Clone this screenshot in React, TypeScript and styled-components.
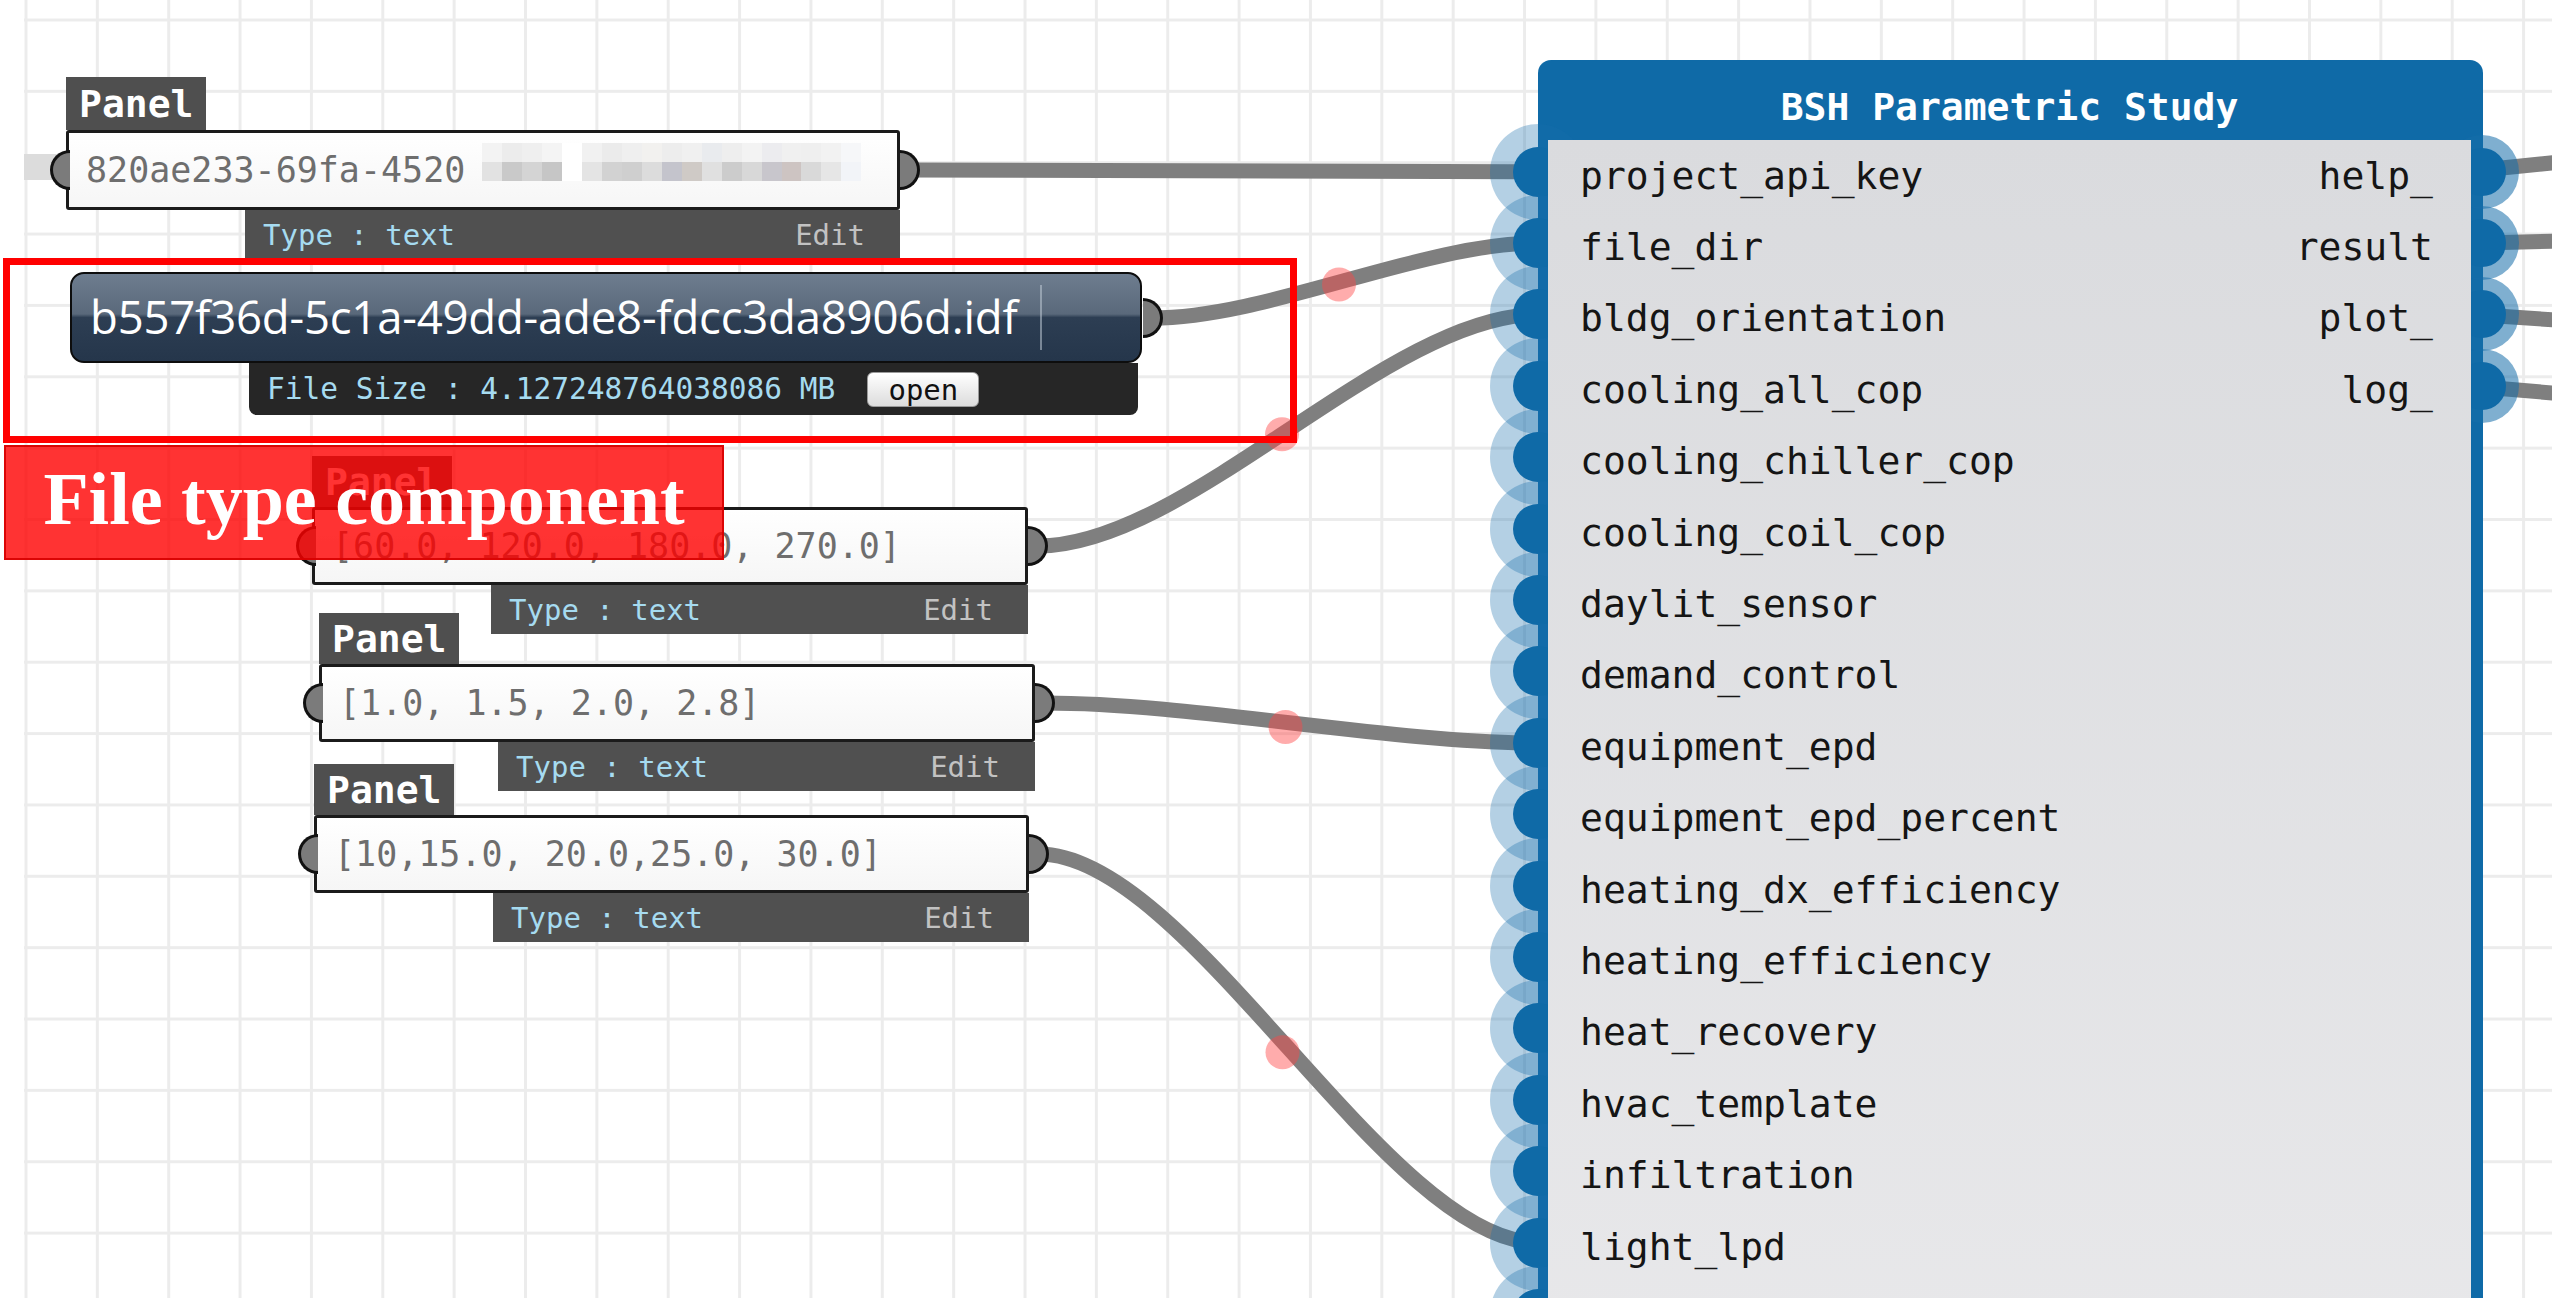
import React from "react";
import styled, { createGlobalStyle } from "styled-components";

const MONO = `"DejaVu Sans Mono", "Liberation Mono", monospace`;
const BLUE = "#0f6aa7";

const GlobalStyle = createGlobalStyle`
  html, body { margin: 0; padding: 0; background: #fff; }
  body { overflow: hidden; }
  * { box-sizing: border-box; }
`;

const Canvas = styled.div`
  position: relative;
  width: 2552px;
  height: 1298px;
  overflow: hidden;
  background: #fff;
  font-family: ${MONO};
`;

const Grid = styled.div`
  position: absolute;
  left: 24px;
  top: 0;
  right: 0;
  bottom: 0;
  background-image:
    linear-gradient(to right, #ececec 0, #ececec 3px, transparent 3px),
    linear-gradient(to bottom, #ececec 0, #ececec 3px, transparent 3px);
  background-size: 71.37px 71.37px;
  background-position: 0.5px 18.5px;
`;

const WireLayer = styled.svg`
  position: absolute;
  left: 0;
  top: 0;
  z-index: 1;
  overflow: visible;
`;

/* ---------- panels ---------- */

const PanelNode = styled.div<{ $x: number; $y: number; $w: number }>`
  position: absolute;
  left: ${p => p.$x}px;
  top: ${p => p.$y}px;
  width: ${p => p.$w}px;
  z-index: 2;
  display: flex;
  flex-direction: column;
`;

const PanelTag = styled.div<{ $h: number }>`
  align-self: flex-start;
  height: ${p => p.$h}px;
  padding: 0 13px;
  display: flex;
  align-items: center;
  background: #4f4f4f;
  color: #fff;
  font: bold 38px ${MONO};
`;

const PanelBox = styled.div<{ $h: number }>`
  position: relative;
  height: ${p => p.$h}px;
  display: flex;
  align-items: center;
  padding-left: 17px;
  background: linear-gradient(#ffffff, #f6f6f6);
  border: 3px solid #1b1b1b;
  border-radius: 3px;
  color: #6e6e6e;
  font-size: 35px;
  white-space: pre;
`;

const Port = styled.span<{ $side: "left" | "right" }>`
  position: absolute;
  top: 50%;
  width: 20px;
  height: 40px;
  margin-top: -20px;
  background: #7b7b7b;
  border: 3px solid #111;
  ${p =>
    p.$side === "left"
      ? `left: -19px; border-right: none; border-radius: 20px 0 0 20px / 20px 0 0 20px;`
      : `right: -23px; border-left: none; border-radius: 0 20px 20px 0 / 0 20px 20px 0;`}
`;

const BlurStrip = styled.div`
  display: grid;
  grid-template-columns: repeat(19, 1fr);
  grid-template-rows: 1fr 1fr;
  width: 379px;
  height: 38px;
  margin-left: 17px;
  margin-bottom: 16px;
`;

const BlurCell = styled.span<{ $c: string }>`
  background: ${p => p.$c};
`;

const InfoBar = styled.div<{ $dark?: boolean }>`
  margin-left: 179px;
  margin-right: ${p => (p.$dark ? 4 : 0)}px;
  height: ${p => (p.$dark ? 52 : 49)}px;
  display: flex;
  align-items: center;
  justify-content: ${p => (p.$dark ? "flex-start" : "space-between")};
  gap: 32px;
  padding: 0 35px 0 18px;
  background: ${p => (p.$dark ? "#262626" : "#505050")};
  border-radius: ${p => (p.$dark ? "0 0 8px 8px" : "0")};
  font-size: ${p => (p.$dark ? 29.5 : 29)}px;
  white-space: pre;
`;

const InfoText = styled.span`
  color: #a6dbf0;
`;

const EditText = styled.span`
  color: #c2c2c2;
`;

/* ---------- file component ---------- */

const FileBox = styled.div`
  position: relative;
  height: 91px;
  display: flex;
  align-items: center;
  padding-left: 18px;
  border: 2px solid #0d0d0d;
  border-radius: 14px;
  background: linear-gradient(
    #6e7d8f 0%,
    #5a697b 46%,
    #2d3e53 50%,
    #25364b 100%
  );
  color: #fff;
  font: 45.5px "Open Sans", "Noto Sans", sans-serif;
`;

const FileName = styled.span`
  flex: 1;
  padding-bottom: 4px;
  letter-spacing: -0.2px;
`;

const Caret = styled.span`
  width: 2px;
  height: 65px;
  margin-right: 98px;
  background: rgba(190, 200, 212, 0.55);
`;

const OpenButton = styled.button`
  width: 112px;
  height: 35px;
  padding: 0 0 4px;
  border: 1px solid #9a9a9a;
  border-radius: 6px;
  background: linear-gradient(#ffffff, #dcdcdc);
  color: #111;
  font: 29px ${MONO};
`;

/* ---------- main node ---------- */

const Node = styled.div<{ $x: number; $y: number; $w: number }>`
  position: absolute;
  left: ${p => p.$x}px;
  top: ${p => p.$y}px;
  width: ${p => p.$w}px;
  height: 1400px;
  z-index: 2;
  display: flex;
  flex-direction: column;
  padding: 0 12px 0 10px;
  background: ${BLUE};
  border-radius: 13px 13px 0 0;
`;

const NodeTitle = styled.div`
  height: 80px;
  flex-shrink: 0;
  display: flex;
  align-items: center;
  justify-content: center;
  padding-top: 14px;
  color: #fff;
  font: bold 38px ${MONO};
`;

const NodeBody = styled.div`
  flex: 1;
  display: flex;
  flex-direction: column;
  background: linear-gradient(#dadbde, #e9e9eb);
`;

const Row = styled.div`
  position: relative;
  height: 71.4px;
  flex-shrink: 0;
  display: flex;
  align-items: center;
  justify-content: space-between;
  padding: 0 38px 0 32px;
  color: #151515;
  font-size: 38px;
`;

const InPort = styled.span`
  position: absolute;
  left: -35px;
  top: calc(50% - 29px);
  width: 50px;
  height: 50px;
  border-radius: 50%;
  background: ${BLUE};
  box-shadow: 0 0 0 23px rgba(22, 110, 170, 0.32);
  z-index: -1;
`;

const OutPort = styled.span`
  position: absolute;
  right: -35px;
  top: calc(50% - 28px);
  width: 48px;
  height: 48px;
  border-radius: 50%;
  background: ${BLUE};
  box-shadow: 0 0 0 13px rgba(22, 110, 170, 0.55);
  z-index: -1;
`;

/* ---------- annotation ---------- */

const Callout = styled.div`
  position: absolute;
  left: 3px;
  top: 258px;
  width: 1294px;
  height: 185px;
  border: 7px solid #ff0000;
  z-index: 3;
`;

const CalloutTag = styled.div`
  position: absolute;
  left: 4px;
  top: 445px;
  width: 720px;
  height: 115px;
  display: flex;
  align-items: center;
  justify-content: center;
  padding-bottom: 6px;
  background: rgba(255, 0, 0, 0.8);
  border: 2px solid rgba(215, 0, 0, 0.9);
  color: #fff;
  font: bold 74px "Liberation Serif", "Times New Roman", serif;
  z-index: 3;
`;

/* ---------- data ---------- */

const panels = [
  { x: 66, y: 77, w: 834, tagH: 53, boxH: 80, text: "820ae233-69fa-4520", blur: true },
  { x: 312, y: 456, w: 716, tagH: 51, boxH: 78, text: "[60.0, 120.0, 180.0, 270.0]" },
  { x: 319, y: 613, w: 716, tagH: 51, boxH: 78, text: "[1.0, 1.5, 2.0, 2.8]" },
  { x: 314, y: 764, w: 715, tagH: 51, boxH: 78, text: "[10,15.0, 20.0,25.0, 30.0]" },
];

const blurTop = ["#f3f3f3", "#ececec", "#efefef", "#f4f4f4", "#ffffff", "#f1f1f1", "#ebebeb", "#efefef", "#f2f1ef", "#ededed", "#f0f0f0", "#e9ebee", "#eeeeee", "#f3f3f3", "#ececef", "#f0f0f0", "#efefef", "#f2f2f2", "#f6f7f9"];
const blurBottom = ["#e2e2e2", "#c9c9c9", "#d4d4d4", "#c6c6c6", "#ffffff", "#e4e4e4", "#d2d2d2", "#cfcfcf", "#dcdcdc", "#c4c4cc", "#cfcac6", "#e0e0e0", "#cccccc", "#d8d8d8", "#c8c6cc", "#cdc4c2", "#d9d9d9", "#e6e6e6", "#f2f4f8"];

const node = { x: 1538, y: 60, w: 945 };

const inputs = [
  "project_api_key",
  "file_dir",
  "bldg_orientation",
  "cooling_all_cop",
  "cooling_chiller_cop",
  "cooling_coil_cop",
  "daylit_sensor",
  "demand_control",
  "equipment_epd",
  "equipment_epd_percent",
  "heating_dx_efficiency",
  "heating_efficiency",
  "heat_recovery",
  "hvac_template",
  "infiltration",
  "light_lpd",
  "",
];
const outputs = ["help_", "result", "plot_", "log_"];

const portY = (i: number) => node.y + 80 + 71.4 * (i + 0.5) - 4;
const inX = node.x;
const outX = node.x + node.w - 1;

const panelOut = (i: number) => {
  const p = panels[i];
  return { x: p.x + p.w + 10, y: p.y + p.tagH + p.boxH / 2 };
};

const curve = (x0: number, y0: number, x1: number, y1: number) => {
  const d = (x1 - x0) * 0.3;
  return `M${x0} ${y0} C${x0 + d} ${y0}, ${x1 - d} ${y1}, ${x1} ${y1}`;
};

const fileOut = { x: 1152, y: 318 };

const links = [
  { from: fileOut, to: 1 },
  { from: panelOut(1), to: 2 },
  { from: panelOut(2), to: 8 },
  { from: panelOut(3), to: 15 },
];

const rightWires = [
  [170, 158],
  [243, 240],
  [315, 323],
  [387, 397],
];

export default function App() {
  const p1 = panelOut(0);
  return (
    <Canvas>
      <GlobalStyle />
      <Grid />

      <WireLayer width={2552} height={1298}>
        <line x1={24} y1={167} x2={70} y2={167} stroke="#dcdcdc" strokeWidth={26} />
        <path d={`M${p1.x} ${p1.y} L${inX} ${portY(0)}`} stroke="#7f7f7f" strokeWidth={15} fill="none" />
        {links.map((l, i) => (
          <path
            key={i}
            d={curve(l.from.x, l.from.y, inX, portY(l.to))}
            stroke="#7f7f7f"
            strokeWidth={15}
            fill="none"
          />
        ))}
        {rightWires.map(([a, b], i) => (
          <path key={i} d={`M${outX} ${a} L2600 ${b}`} stroke="#7f7f7f" strokeWidth={15} fill="none" />
        ))}
        {links.map((l, i) => (
          <circle
            key={i}
            cx={(l.from.x + inX) / 2 - 6}
            cy={(l.from.y + portY(l.to)) / 2 + 4}
            r={17}
            fill="rgba(255, 70, 70, 0.45)"
          />
        ))}
      </WireLayer>

      {panels.map((p, i) => (
        <PanelNode key={i} $x={p.x} $y={p.y} $w={p.w}>
          <PanelTag $h={p.tagH}>Panel</PanelTag>
          <PanelBox $h={p.boxH}>
            <Port $side="left" />
            {p.text}
            {p.blur && (
              <BlurStrip>
                {[...blurTop, ...blurBottom].map((c, j) => (
                  <BlurCell key={j} $c={c} />
                ))}
              </BlurStrip>
            )}
            <Port $side="right" />
          </PanelBox>
          <InfoBar>
            <InfoText>Type : text</InfoText>
            <EditText>Edit</EditText>
          </InfoBar>
        </PanelNode>
      ))}

      <PanelNode $x={70} $y={272} $w={1072}>
        <FileBox>
          <FileName>b557f36d-5c1a-49dd-ade8-fdcc3da8906d.idf</FileName>
          <Caret />
          <Port $side="right" />
        </FileBox>
        <InfoBar $dark>
          <InfoText>File Size : 4.127248764038086 MB</InfoText>
          <OpenButton>open</OpenButton>
        </InfoBar>
      </PanelNode>

      <Node $x={node.x} $y={node.y} $w={node.w}>
        <NodeTitle>BSH Parametric Study</NodeTitle>
        <NodeBody>
          {inputs.map((name, i) => (
            <Row key={i}>
              <InPort />
              <span>{name}</span>
              {outputs[i] && <span>{outputs[i]}</span>}
              {outputs[i] && <OutPort />}
            </Row>
          ))}
        </NodeBody>
      </Node>

      <Callout />
      <CalloutTag>File type component</CalloutTag>
    </Canvas>
  );
}
